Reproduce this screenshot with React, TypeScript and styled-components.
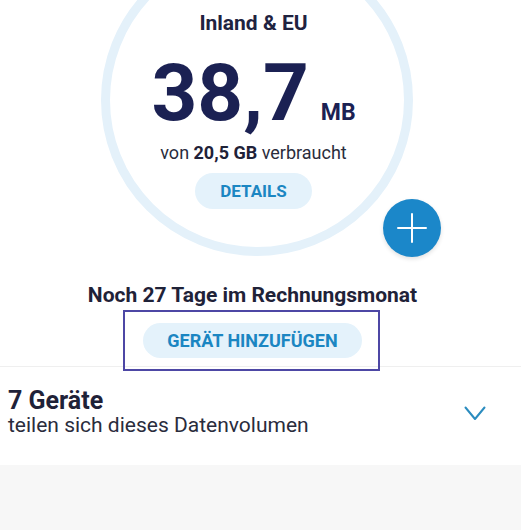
import React from "react";
import styled, { createGlobalStyle } from "styled-components";

const GlobalStyle = createGlobalStyle`
  body {
    margin: 0;
    background: #f7f7f7;
    font-family: Roboto, "Liberation Sans", sans-serif;
    color: #1f2238;
  }
`;

const Page = styled.div`
  width: 521px;
  height: 530px;
  overflow: hidden;
  background: #f7f7f7;
`;

const Summary = styled.section`
  position: relative;
  display: flex;
  flex-direction: column;
  align-items: center;
  padding: 0 8px 8px 0;
  background: #fff;
  border-bottom: 1px solid #efefef;
`;

const Ring = styled.div`
  box-sizing: border-box;
  width: 312px;
  height: 312px;
  margin-top: -56px;
  padding: 58px 6px 0 0;
  border: 9px solid #e4f1fa;
  border-radius: 50%;
  display: flex;
  flex-direction: column;
  align-items: center;
`;

const RingLabel = styled.div`
  font-size: 21px;
  line-height: 24px;
  font-weight: 700;
  color: #1f2340;
`;

const Usage = styled.div`
  display: flex;
  align-items: baseline;
  margin-top: 18px;
  color: #1b2153;
  font-weight: 700;
`;

const Amount = styled.span`
  font-size: 80px;
  line-height: 80px;
`;

const Unit = styled.span`
  font-size: 23px;
  margin-left: 12px;
`;

const Quota = styled.div`
  margin-top: 10px;
  font-size: 18px;
  line-height: 20px;
  color: #2a2c3c;

  b {
    font-weight: 700;
    color: #1f2238;
  }
`;

const PillButton = styled.button<{ $wide?: boolean }>`
  all: unset;
  box-sizing: border-box;
  display: flex;
  align-items: center;
  justify-content: center;
  height: ${(p) => (p.$wide ? "35px" : "36px")};
  padding: 0 24px;
  border-radius: 18px;
  background: #e4f2fb;
  color: #1b86c2;
  font-family: Roboto, "Liberation Sans", sans-serif;
  font-size: ${(p) => (p.$wide ? "18px" : "17px")};
  font-weight: 700;
  cursor: pointer;
`;

const DetailsButton = styled(PillButton)`
  margin-top: 10px;
  width: 117px;
`;

const Fab = styled.button`
  all: unset;
  position: absolute;
  left: 383px;
  top: 199px;
  width: 58px;
  height: 58px;
  border-radius: 50%;
  background: #1b87c9;
  display: flex;
  align-items: center;
  justify-content: center;
  box-shadow: 0 2px 4px rgba(0, 0, 0, 0.12);
  cursor: pointer;
`;

const Cycle = styled.div`
  margin: 27px 8px 0 0;
  font-size: 21px;
  line-height: 24px;
  font-weight: 700;
  color: #1f2238;
`;

const FocusFrame = styled.div`
  position: relative;
  margin: 16px 8px 0 0;

  &::after {
    content: "";
    position: absolute;
    top: -13px;
    bottom: -13px;
    left: -20px;
    right: -18px;
    border: 2px solid #4d47a5;
    pointer-events: none;
  }
`;

const DevicesRow = styled.section`
  display: flex;
  align-items: center;
  justify-content: space-between;
  padding: 22px 35px 28px 8px;
  background: #fff;
`;

const DevicesText = styled.div`
  display: flex;
  flex-direction: column;
`;

const DevicesTitle = styled.div`
  font-size: 25px;
  line-height: 24px;
  font-weight: 700;
  color: #1f2238;
`;

const DevicesSub = styled.div`
  font-size: 21px;
  line-height: 24px;
  color: #2a2c3c;
`;

const Chevron = styled.svg`
  display: block;
`;

export default function App() {
  return (
    <Page>
      <GlobalStyle />
      <Summary>
        <Ring>
          <RingLabel>Inland &amp; EU</RingLabel>
          <Usage>
            <Amount>38,7</Amount>
            <Unit>MB</Unit>
          </Usage>
          <Quota>
            von <b>20,5 GB</b> verbraucht
          </Quota>
          <DetailsButton>DETAILS</DetailsButton>
        </Ring>
        <Fab aria-label="Hinzufügen">
          <svg width="30" height="30" viewBox="0 0 30 30">
            <path d="M15 1v28M1 15h28" stroke="#fff" strokeWidth="2" strokeLinecap="round" />
          </svg>
        </Fab>
        <Cycle>Noch 27 Tage im Rechnungsmonat</Cycle>
        <FocusFrame>
          <PillButton $wide>GERÄT HINZUFÜGEN</PillButton>
        </FocusFrame>
      </Summary>
      <DevicesRow>
        <DevicesText>
          <DevicesTitle>7 Geräte</DevicesTitle>
          <DevicesSub>teilen sich dieses Datenvolumen</DevicesSub>
        </DevicesText>
        <Chevron width="22" height="15" viewBox="0 0 22 15">
          <path d="M1.5 1.5 11 13 20.5 1.5" fill="none" stroke="#2b8cbf" strokeWidth="2" strokeLinecap="round" strokeLinejoin="round" />
        </Chevron>
      </DevicesRow>
    </Page>
  );
}
